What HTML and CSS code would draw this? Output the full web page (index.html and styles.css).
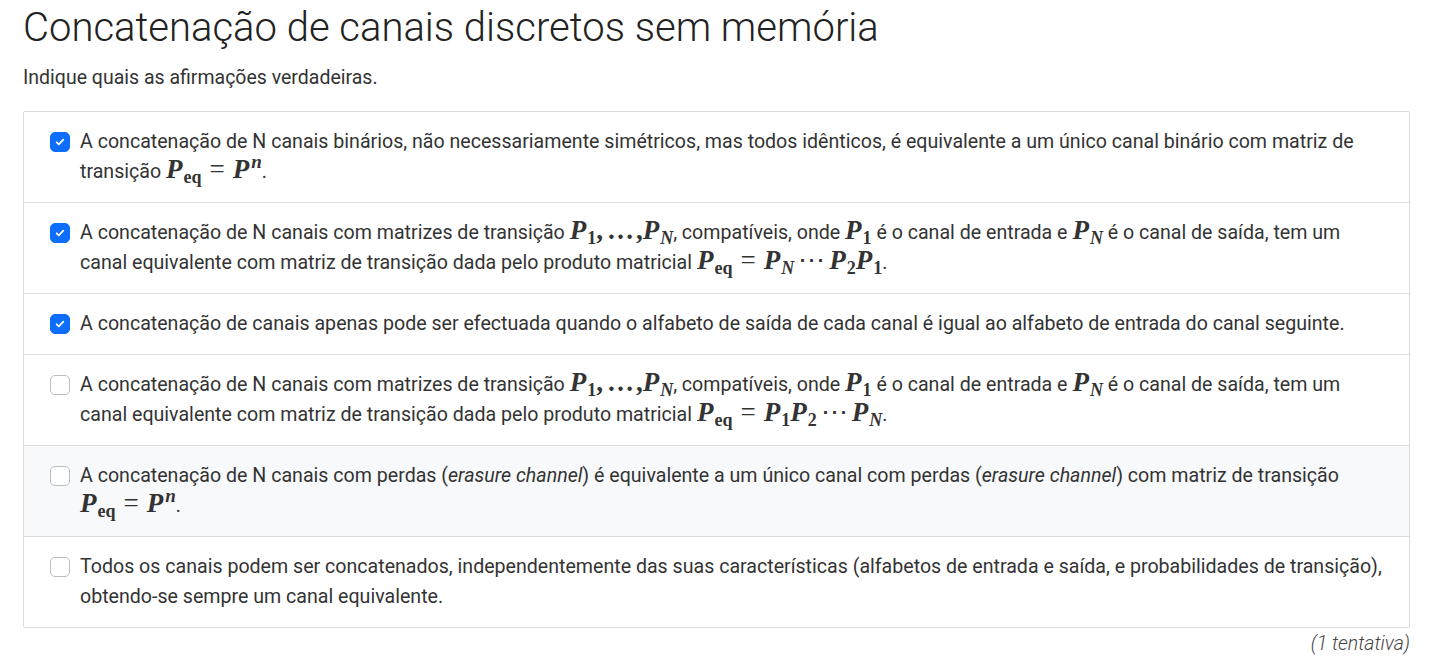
FILE: index.html
```html
<!DOCTYPE html>
<html lang="pt">
<head>
<meta charset="utf-8">
<title>Concatenação de canais discretos sem memória</title>
<link rel="stylesheet" href="styles.css">
</head>
<body>
<main class="page">
  <h1 class="title">Concatenação de canais discretos sem memória</h1>
  <p class="lead">Indique quais as afirmações verdadeiras.</p>
  <ul class="options">
    <li class="option">
      <span class="box checked"><svg viewBox="0 0 20 20" width="12" height="12"><path d="M4.5 10.5l3.5 3.5 7.5-8" fill="none" stroke="#fff" stroke-width="3" stroke-linecap="round" stroke-linejoin="round"/></svg></span>
      <span class="text">A concatenação de N canais binários, não necessariamente simétricos, mas todos idênticos, é equivalente a um único canal binário com matriz de transição <span class="math"><span class="v">P</span><span class="sub">eq</span><span class="op">=</span><span class="v">P</span><span class="sup">n</span></span>.</span>
    </li>
    <li class="option">
      <span class="box checked"><svg viewBox="0 0 20 20" width="12" height="12"><path d="M4.5 10.5l3.5 3.5 7.5-8" fill="none" stroke="#fff" stroke-width="3" stroke-linecap="round" stroke-linejoin="round"/></svg></span>
      <span class="text">A concatenação de N canais com matrizes de transição <span class="math"><span class="v">P</span><span class="sub">1</span><span class="n">,</span><span class="n dots">…</span><span class="n">,</span><span class="v">P</span><span class="sub i">N</span></span>, compatíveis, onde <span class="math"><span class="v">P</span><span class="sub">1</span></span> é o canal de entrada e <span class="math"><span class="v">P</span><span class="sub i">N</span></span> é o canal de saída, tem um canal equivalente com matriz de transição dada pelo produto matricial <span class="math"><span class="v">P</span><span class="sub">eq</span><span class="op">=</span><span class="v">P</span><span class="sub i">N</span><span class="n cdots">⋯</span><span class="v">P</span><span class="sub">2</span><span class="v">P</span><span class="sub">1</span></span>.</span>
    </li>
    <li class="option">
      <span class="box checked"><svg viewBox="0 0 20 20" width="12" height="12"><path d="M4.5 10.5l3.5 3.5 7.5-8" fill="none" stroke="#fff" stroke-width="3" stroke-linecap="round" stroke-linejoin="round"/></svg></span>
      <span class="text">A concatenação de canais apenas pode ser efectuada quando o alfabeto de saída de cada canal é igual ao alfabeto de entrada do canal seguinte.</span>
    </li>
    <li class="option">
      <span class="box"></span>
      <span class="text">A concatenação de N canais com matrizes de transição <span class="math"><span class="v">P</span><span class="sub">1</span><span class="n">,</span><span class="n dots">…</span><span class="n">,</span><span class="v">P</span><span class="sub i">N</span></span>, compatíveis, onde <span class="math"><span class="v">P</span><span class="sub">1</span></span> é o canal de entrada e <span class="math"><span class="v">P</span><span class="sub i">N</span></span> é o canal de saída, tem um canal equivalente com matriz de transição dada pelo produto matricial <span class="math"><span class="v">P</span><span class="sub">eq</span><span class="op">=</span><span class="v">P</span><span class="sub">1</span><span class="v">P</span><span class="sub">2</span><span class="n cdots">⋯</span><span class="v">P</span><span class="sub i">N</span></span>.</span>
    </li>
    <li class="option hover">
      <span class="box"></span>
      <span class="text">A concatenação de N canais com perdas (<em>erasure channel</em>) é equivalente a um único canal com perdas (<em>erasure channel</em>) com matriz de transição <span class="math"><span class="v">P</span><span class="sub">eq</span><span class="op">=</span><span class="v">P</span><span class="sup">n</span></span>.</span>
    </li>
    <li class="option">
      <span class="box"></span>
      <span class="text">Todos os canais podem ser concatenados, independentemente das suas características (alfabetos de entrada e saída, e probabilidades de transição), obtendo-se sempre um canal equivalente.</span>
    </li>
  </ul>
  <p class="attempts">(1 tentativa)</p>
</main>
</body>
</html>
```

FILE: styles.css
```css
* { box-sizing: border-box; }
html, body { margin: 0; padding: 0; background: #fff; }
body {
  font-family: Roboto, "Liberation Sans", Arial, sans-serif;
  color: #2b2b2b;
}
.page {
  padding: 0 29px 0 23px;
}
.title {
  margin: 0;
  padding-top: 6px;
  font-size: 40px;
  font-weight: 300;
  line-height: 44px;
  color: #222;
}
.lead {
  margin: 16px 0 0;
  font-size: 19.5px;
  font-weight: 400;
  line-height: 24px;
  color: #333;
}
.options {
  list-style: none;
  margin: 21px 0 0;
  padding: 0;
  border: 1px solid #dcdcdc;
  border-radius: 2px;
}
.option {
  display: flex;
  align-items: flex-start;
  gap: 10px;
  padding: 15px 20px 15px 26px;
  border-top: 1px solid #dcdcdc;
  font-size: 19.6px;
  line-height: 30px;
  font-weight: 400;
  color: #333;
}
.option:first-child { border-top: 0; }
.option.hover { background: #f8f9fb; }
.box {
  flex: 0 0 auto;
  width: 20px;
  height: 20px;
  margin-top: 5px;
  border: 1px solid #b8bcc2;
  border-radius: 5px;
  background: #fff;
  display: flex;
  align-items: center;
  justify-content: center;
}
.box.checked {
  background: #0d6efd;
  border-color: #0d6efd;
}
.text em { font-style: italic; }
.math {
  font-family: "Liberation Serif", "Times New Roman", serif;
  font-size: 27px;
  font-weight: 700;
  white-space: nowrap;
  line-height: 0;
}
.math .v { font-style: italic; }
.math .sub {
  font-size: 18px;
  vertical-align: -5px;
  line-height: 0;
  margin-left: 1px;
}
.math .sub.i { font-style: italic; }
.math .sup {
  font-size: 19px;
  font-style: italic;
  vertical-align: 10px;
  line-height: 0;
  margin-left: 2px;
}
.math .op {
  font-weight: 400;
  margin: 0 8px;
}
.math .n { font-weight: 700; }
.math .dots { margin: 0 2px 0 4px; }
.math .cdots { margin: 0 4px; font-weight: 400; }
.attempts {
  margin: 4px 0 0;
  text-align: right;
  font-size: 19.5px;
  font-weight: 300;
  font-style: italic;
  color: #444;
  line-height: 24px;
}
```
